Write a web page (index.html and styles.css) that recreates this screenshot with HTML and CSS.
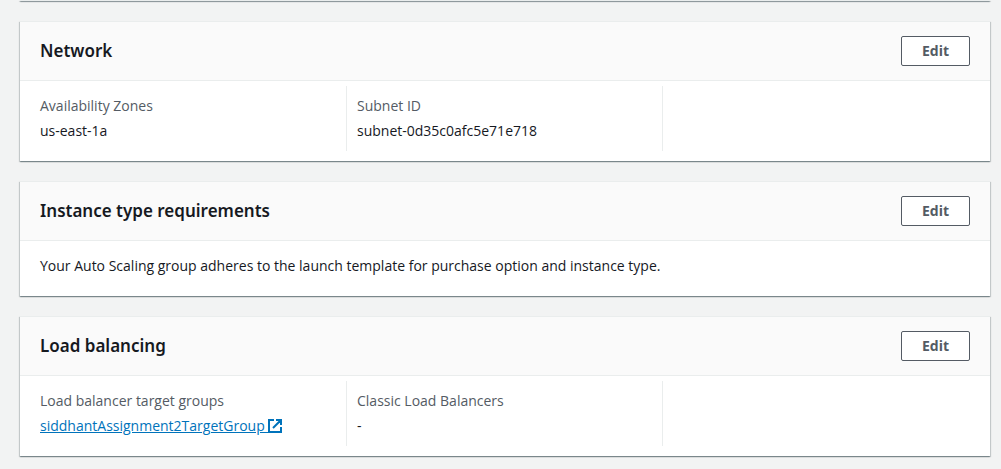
FILE: index.html
```html
<!DOCTYPE html>
<html lang="en">
<head>
<meta charset="utf-8">
<meta name="viewport" content="width=device-width, initial-scale=1">
<title>Auto Scaling group details</title>
<link rel="stylesheet" href="styles.css">
</head>
<body>
<main class="page">
  <div class="card card-previous"></div>

  <section class="card" aria-labelledby="network">
    <header class="card-header">
      <h2 class="card-title" id="network">Network</h2>
      <button class="button" type="button">Edit</button>
    </header>
    <dl class="columns">
      <div class="column">
        <dt class="label">Availability Zones</dt>
        <dd class="value">us-east-1a</dd>
      </div>
      <div class="column">
        <dt class="label">Subnet ID</dt>
        <dd class="value">subnet-0d35c0afc5e71e718</dd>
      </div>
      <div class="column"></div>
    </dl>
  </section>

  <section class="card" aria-labelledby="instance">
    <header class="card-header">
      <h2 class="card-title" id="instance">Instance type requirements</h2>
      <button class="button" type="button">Edit</button>
    </header>
    <p class="card-text">Your Auto Scaling group adheres to the launch template for purchase option and instance type.</p>
  </section>

  <section class="card" aria-labelledby="balancing">
    <header class="card-header">
      <h2 class="card-title" id="balancing">Load balancing</h2>
      <button class="button" type="button">Edit</button>
    </header>
    <dl class="columns">
      <div class="column">
        <dt class="label">Load balancer target groups</dt>
        <dd class="value"><a class="link" href="#">siddhantAssignment2TargetGroup <svg class="icon" viewBox="0 0 14 14" aria-hidden="true"><path d="M6 1H1v12h12V8M8 1h5v5M13 1L5 9"/></svg></a></dd>
      </div>
      <div class="column">
        <dt class="label">Classic Load Balancers</dt>
        <dd class="value">-</dd>
      </div>
      <div class="column"></div>
    </dl>
  </section>
</main>
</body>
</html>
```
FILE: styles.css
```css
* {
  box-sizing: border-box;
}

body {
  margin: 0;
  background: #f2f3f3;
  color: #16191f;
  font-family: "Open Sans", "Noto Sans", sans-serif;
  font-size: 14px;
  line-height: 22px;
}

.page {
  display: flex;
  flex-direction: column;
  gap: 20px;
  padding: 0 11px 12px 20px;
}

.card {
  border-top: 1px solid #eaeded;
  background: #fff;
  box-shadow: 0 1px 1px 0 rgba(0, 28, 36, 0.3), 1px 1px 1px 0 rgba(0, 28, 36, 0.15), -1px 1px 1px 0 rgba(0, 28, 36, 0.15);
}

.card-header {
  display: flex;
  align-items: center;
  justify-content: space-between;
  gap: 20px;
  padding: 14px 20px;
  border-bottom: 1px solid #eaeded;
  background: #fafafa;
}

.card-title {
  margin: 0;
  font-family: "Noto Sans", "Open Sans", sans-serif;
  font-size: 17px;
  font-weight: 600;
  line-height: 22px;
}

.button {
  padding: 3px 20px;
  border: 1px solid #545b64;
  border-radius: 2px;
  background: #fff;
  color: #545b64;
  font: inherit;
  font-weight: 700;
  cursor: pointer;
}

.columns {
  display: grid;
  grid-template-columns: repeat(3, 1fr);
  margin: 0;
  padding: 5px 12px 10px 10px;
}

.column {
  padding: 9px 10px;
}

.column + .column {
  border-left: 1px solid #eaeded;
}

.label {
  color: #545b64;
}

.value {
  margin: 3px 0 0;
}

.card-text {
  margin: 0;
  padding: 14px 20px 19px;
}

.link {
  color: #0073bb;
  text-decoration: underline;
}

.icon {
  width: 14px;
  height: 14px;
  vertical-align: -2px;
  fill: none;
  stroke: currentColor;
  stroke-width: 2;
}
```
